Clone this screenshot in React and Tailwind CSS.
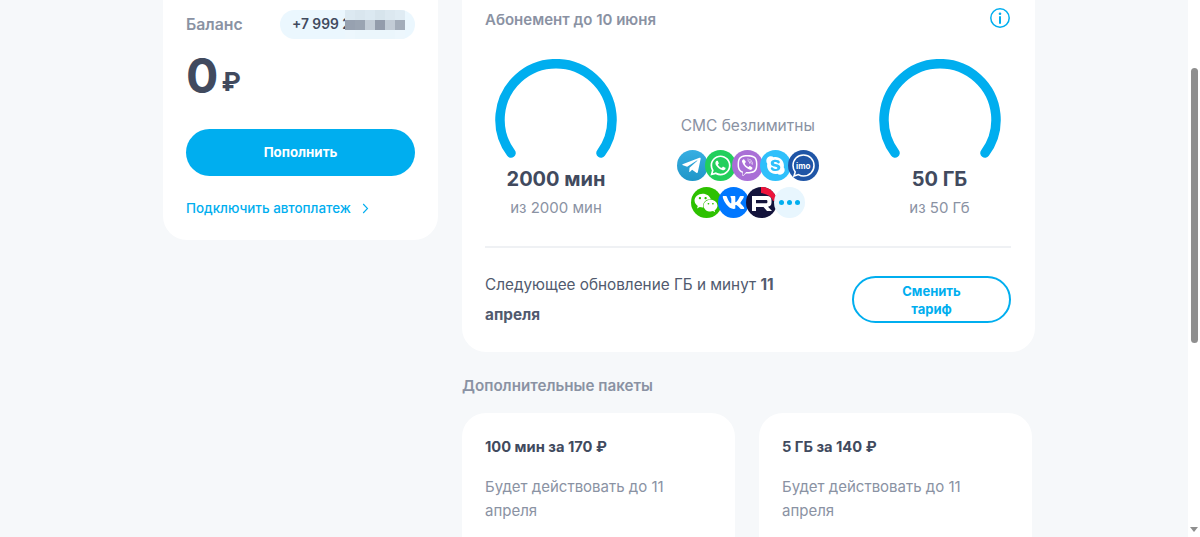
import React from "react";
import { FaTelegramPlane, FaWhatsapp, FaViber, FaSkype, FaWeixin, FaVk } from "react-icons/fa";

function Gauge({ big, small }) {
  return (
    <div className="flex flex-col items-center w-[130px]">
      <svg width="122" height="100" viewBox="0 0 122 100" fill="none" className="block">
        <path d="M16 94 A56 56 0 1 1 106 94" stroke="#00aeef" strokeWidth="9.5" strokeLinecap="round" />
      </svg>
      <div className="mt-[6px] text-[20px] leading-[28px] font-bold text-[#414a5e] whitespace-nowrap">{big}</div>
      <div className="mt-[5px] text-[15px] leading-[20px] text-[#8a92a3] whitespace-nowrap">{small}</div>
    </div>
  );
}

function Badge({ className, children, first }) {
  return (
    <div className={`relative w-[31px] h-[31px] rounded-full flex items-center justify-center shrink-0 overflow-hidden text-white ${first ? "" : "-ml-[3.25px]"} ${className}`}>
      {children}
    </div>
  );
}

function Messengers() {
  return (
    <div className="flex flex-col items-center gap-[6px]">
      <div className="flex">
        <Badge first className="bg-linear-to-b from-[#37aee2] to-[#1e96c8]"><FaTelegramPlane size={21} className="-ml-[2px]" /></Badge>
        <Badge className="bg-[#22cf5c]"><FaWhatsapp size={23} /></Badge>
        <Badge className="bg-[#a96fd6]"><FaViber size={21} /></Badge>
        <Badge className="bg-[#2fc0fb]"><FaSkype size={21} /></Badge>
        <Badge className="bg-[#1f55a6]">
          <svg width="27" height="27" viewBox="0 0 27 27" fill="none" className="absolute left-[2px] top-[2px]">
            <path d="M13.5 3 C7.5 3 3 7.5 3 13.5 C3 16 3.8 18.2 5.2 20 L4 24 L8.5 22.6 C10 23.5 11.7 24 13.5 24 C19.5 24 24 19.5 24 13.5 C24 7.5 19.5 3 13.5 3 Z" stroke="#fff" strokeWidth="1.6" />
          </svg>
          <span className="relative text-[8px] leading-none font-bold">imo</span>
        </Badge>
      </div>
      <div className="flex">
        <Badge first className="bg-[#2dc100]"><FaWeixin size={24} /></Badge>
        <Badge className="bg-[#0077ff]"><FaVk size={23} /></Badge>
        <Badge className="bg-[#14143c]">
          <svg width="31" height="31" viewBox="0 0 31 31" className="absolute inset-0">
            <path d="M15 0 H31 V13 L27 14 C26 10 22 7 15 6 Z" fill="#ed143b" />
            <path d="M6 9 H21 C24 9 25.5 10.5 25.5 13.5 V15.5 C25.5 18 24.2 19.4 22 19.7 L26 24 H21 L17.5 20 H10 V24 H6 Z M10 13 V16.2 H20 C21 16.2 21.4 15.9 21.4 15 V14.2 C21.4 13.3 21 13 20 13 Z" fill="#fff" fillRule="evenodd" />
          </svg>
        </Badge>
        <Badge className="bg-[#e8f6fe] gap-[3px]">
          <span className="w-[5px] h-[5px] rounded-full bg-[#00aeef]" />
          <span className="w-[5px] h-[5px] rounded-full bg-[#00aeef]" />
          <span className="w-[5px] h-[5px] rounded-full bg-[#00aeef]" />
        </Badge>
      </div>
    </div>
  );
}

function Pack({ title }) {
  return (
    <div className="w-[273px] h-[200px] bg-white rounded-[24px] px-[23px] pt-[23px] shrink-0">
      <div className="text-[14.7px] leading-[22px] font-bold text-[#414a5e]">{title}</div>
      <div className="mt-[17px] text-[15px] leading-[23.5px] text-[#8a92a3] w-[200px]">Будет действовать до 11 апреля</div>
    </div>
  );
}

const blocks = [
  ["#dce9f1", "#d9e6ee", "#dce9f1", "#d7e4ec", "#dce8f0", "#dfebf3"],
  ["#97a1b0", "#9aa4b2", "#c3cdd7", "#939cab", "#c2ccd6", "#a3adba"],
  ["#edf7fd", "#ebf6fc", "#ebf6fc", "#ebf6fc", "#ebf6fc", "#edf7fd"],
];

export default function App() {
  return (
    <div className="flex w-[1200px] h-[537px] overflow-hidden bg-[#f6f8fa] font-['Inter','Liberation_Sans',sans-serif]">
      <main className="flex-1 flex items-start gap-[24px] pl-[163px]">
        <section className="w-[275px] h-[240px] bg-white rounded-b-[24px] px-[23px] pt-[10px] shrink-0">
          <div className="flex items-center justify-between h-[29px]">
            <span className="text-[15.8px] font-semibold text-[#8a92a3]">Баланс</span>
            <div className="relative w-[135px] h-[29px] bg-[#ebf7fe] rounded-full pl-[12px] flex items-center overflow-hidden">
              <span className="text-[13.8px] font-semibold text-[#414a5e] whitespace-nowrap">+7 999 2</span>
              <div className="absolute left-[65px] top-0 flex flex-col">
                {blocks.map((row, i) => (
                  <div key={i} className="flex">
                    {row.map((c, j) => (
                      <div key={j} className="w-[10px] h-[10px]" style={{ backgroundColor: c }} />
                    ))}
                  </div>
                ))}
              </div>
            </div>
          </div>
          <div className="flex items-center gap-[3px] mt-[7px] h-[60px] text-[#414a5e]">
            <span className="text-[48px] leading-[60px] font-bold">0</span>
            <span className="mt-[12px] text-[26px] leading-[32px] font-bold">₽</span>
          </div>
          <button className="mt-[23px] w-[229px] h-[47px] rounded-full bg-[#00aeef] text-white text-[13.3px] font-bold">Пополнить</button>
          <div className="mt-[22px] flex items-center gap-[11px] text-[13.4px] leading-[20px] font-medium text-[#00aeef]">
            <span>Подключить автоплатеж</span>
            <svg width="7" height="11" viewBox="0 0 7 11" fill="none"><path d="M1.2 1 L5.5 5.5 L1.2 10" stroke="#00aeef" strokeWidth="1.1" /></svg>
          </div>
        </section>
        <div className="w-[573px] shrink-0">
          <section className="h-[352px] bg-white rounded-b-[24px] pl-[23px] pr-[24px] pt-[9px]">
            <div className="flex items-center justify-between h-[22px]">
              <span className="text-[15px] font-semibold text-[#8a92a3]">Абонемент до 10 июня</span>
              <svg width="22" height="22" viewBox="0 0 22 22" fill="none" className="-mt-[4px]">
                <circle cx="11" cy="11" r="9.2" stroke="#00aeef" strokeWidth="1.5" />
                <circle cx="11" cy="6.8" r="1.3" fill="#00aeef" />
                <path d="M11 10 V16" stroke="#00aeef" strokeWidth="2" strokeLinecap="round" />
              </svg>
            </div>
            <div className="flex items-start justify-between mt-[28px] h-[158px] pl-[6px] pr-[6.5px]">
              <Gauge big="2000 мин" small="из 2000 мин" />
              <div className="flex flex-col items-center pt-[56px]">
                <div className="text-[15.5px] leading-[22px] text-[#8a92a3] mb-[13px] whitespace-nowrap">СМС безлимитны</div>
                <Messengers />
              </div>
              <Gauge big="50 ГБ" small="из 50 Гб" />
            </div>
            <div className="h-[2px] bg-[#eff1f4] mt-[29px]" />
            <div className="flex items-center justify-between mt-[22px]">
              <p className="w-[310px] text-[15.3px] leading-[29.5px] text-[#515a6e]">Следующее обновление ГБ и минут <b className="font-bold">11 апреля</b></p>
              <button className="w-[159px] h-[47px] rounded-full border-2 border-[#00aeef] bg-white text-[#00aeef] text-[13px] leading-[18px] font-bold px-[40px]">Сменить тариф</button>
            </div>
          </section>
          <h2 className="mt-[23px] text-[15.2px] leading-[22px] font-semibold text-[#8a92a3]">Дополнительные пакеты</h2>
          <div className="flex gap-[24px] mt-[16px]">
            <Pack title="100 мин за 170 ₽" />
            <Pack title="5 ГБ за 140 ₽" />
          </div>
        </div>
      </main>
      <aside className="w-[12px] h-full bg-white flex flex-col items-center shrink-0">
        <div className="w-[7px] h-[275px] mt-[68px] rounded-full bg-[#8f8f8f]" />
        <div className="mt-auto mb-[5px] w-0 h-0 border-x-[4px] border-x-transparent border-t-[5px] border-t-[#8f8f8f]" />
      </aside>
    </div>
  );
}
